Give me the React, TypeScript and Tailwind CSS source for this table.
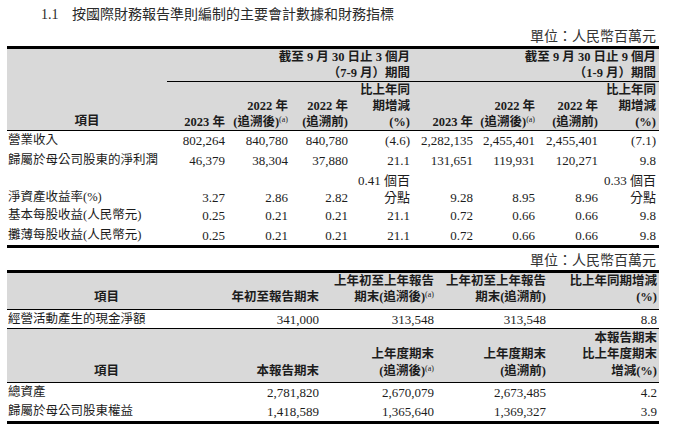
import React from 'react';

type Row = { label: string; values: string[]; h: string; tall?: boolean };

const font = "font-['Liberation_Serif','Noto_Sans_CJK_TC',serif]";

const periodRows: Row[] = [
  { label: '營業收入', values: ['802,264', '840,780', '840,780', '(4.6)', '2,282,135', '2,455,401', '2,455,401', '(7.1)'], h: 'h-[20px]' },
  { label: '歸屬於母公司股東的淨利潤', values: ['46,379', '38,304', '37,880', '21.1', '131,651', '119,931', '120,271', '9.8'], h: 'h-[20px]' },
  { label: '淨資產收益率(%)', values: ['3.27', '2.86', '2.82', '0.41 個百\n分點', '9.28', '8.95', '8.96', '0.33 個百\n分點'], h: 'h-[35px]', tall: true },
  { label: '基本每股收益(人民幣元)', values: ['0.25', '0.21', '0.21', '21.1', '0.72', '0.66', '0.66', '9.8'], h: 'h-[20px]' },
  { label: '攤薄每股收益(人民幣元)', values: ['0.25', '0.21', '0.21', '21.1', '0.72', '0.66', '0.66', '9.8'], h: 'h-[21px]' },
];

const periodCols = [61, 63, 60, 62, 63, 62, 63, 58];

function Sup() {
  return <sup className="text-[8px] font-normal">(a)</sup>;
}

function PeriodTable() {
  return (
    <table className="ml-[7px] w-[652px] table-fixed border-collapse border-y-[3px] border-black">
      <colgroup>
        <col className="w-[160px]" />
        {periodCols.map((w, i) => <col key={i} style={{ width: w }} />)}
      </colgroup>
      <thead className="bg-[#d9d9d9] text-[12.5px] font-bold leading-[16px]">
        <tr>
          <th rowSpan={2} className="h-[81px] pb-[1px] align-bottom text-center">項目</th>
          <th colSpan={4} className="h-[32px] border-b border-black pr-[3px] text-right align-top">截至 9 月 30 日止 3 個月<br />（7-9 月）期間</th>
          <th colSpan={4} className="h-[32px] border-b border-black pr-[3px] text-right align-top">截至 9 月 30 日止 9 個月<br />（1-9 月）期間</th>
        </tr>
        <tr className="[&>th]:h-[48px] [&>th]:pr-[3px] [&>th]:text-right [&>th]:align-bottom">
          <th>2023 年</th>
          <th className="whitespace-nowrap">2022 年<br />(追溯後)<Sup /></th>
          <th>2022 年<br />(追溯前)</th>
          <th>比上年同<br />期增減<br />(%)</th>
          <th>2023 年</th>
          <th className="whitespace-nowrap">2022 年<br />(追溯後)<Sup /></th>
          <th>2022 年<br />(追溯前)</th>
          <th>比上年同<br />期增減<br />(%)</th>
        </tr>
      </thead>
      <tbody className="border-t border-black">
        {periodRows.map((row) => (
          <tr key={row.label} className={row.tall ? 'align-bottom' : 'align-middle'}>
            <td className={`${row.h} whitespace-nowrap pl-[1px] text-[12.5px] leading-[17px]`}>{row.label}</td>
            {row.values.map((v, i) => (
              <td key={i} className="whitespace-pre-line pr-[3px] text-right text-[13px] leading-[17px]">{v}</td>
            ))}
          </tr>
        ))}
      </tbody>
    </table>
  );
}

function BalanceTable() {
  const headA = 'bg-[#d9d9d9] border-b border-black pr-[3px] text-right align-bottom pb-[4px]';
  const headB = 'bg-[#d9d9d9] border-b border-black pr-[3px] text-right align-bottom pb-[3px]';
  return (
    <table className="ml-[7px] w-[652px] table-fixed border-collapse border-y-[3px] border-black">
      <colgroup>
        <col className="w-[202px]" />
        <col className="w-[113px]" />
        <col className="w-[115px]" />
        <col className="w-[112px]" />
        <col className="w-[110px]" />
      </colgroup>
      <tbody>
        <tr className="text-[12.5px] font-bold leading-[16px]">
          <td className={`${headA} h-[36px] !text-center`}>項目</td>
          <td className={headA}>年初至報告期末</td>
          <td className={`${headA} whitespace-nowrap`}>上年初至上年報告<br />期末(追溯後)<Sup /></td>
          <td className={`${headA} whitespace-nowrap`}>上年初至上年報告<br />期末(追溯前)</td>
          <td className={`${headA} !pr-[2px]`}>比上年同期增減<br />(%)</td>
        </tr>
        <tr className="border-b border-black text-right text-[13px] leading-[17px]">
          <td className="h-[19px] pl-[1px] text-left text-[12.5px]">經營活動產生的現金淨額</td>
          <td className="pr-[3px]">341,000</td>
          <td className="pr-[3px]">313,548</td>
          <td className="pr-[3px]">313,548</td>
          <td className="pr-[2px]">8.8</td>
        </tr>
        <tr className="text-[12.5px] font-bold leading-[16.5px]">
          <td className={`${headB} h-[54px] !text-center`}>項目</td>
          <td className={headB}>本報告期末</td>
          <td className={`${headB} whitespace-nowrap`}>上年度期末<br />(追溯後)<Sup /></td>
          <td className={headB}>上年度期末<br />(追溯前)</td>
          <td className={`${headB} !pr-[2px]`}>本報告期末<br />比上年度期末<br />增減(%)</td>
        </tr>
        {[
          ['總資產', '2,781,820', '2,670,079', '2,673,485', '4.2'],
          ['歸屬於母公司股東權益', '1,418,589', '1,365,640', '1,369,327', '3.9'],
        ].map(([label, ...vals]) => (
          <tr key={label} className="text-right text-[13px] leading-[17px]">
            <td className="h-[20px] pl-[1px] text-left text-[12.5px]">{label}</td>
            {vals.map((v, i) => (
              <td key={i} className={i === 3 ? 'pr-[2px]' : 'pr-[3px]'}>{v}</td>
            ))}
          </tr>
        ))}
      </tbody>
    </table>
  );
}

export default function App() {
  return (
    <div className={`h-[431px] w-[680px] overflow-hidden bg-white pt-[4px] text-[#1c1c1c] ${font}`}>
      <div className="flex h-[20px] items-center pl-[41px] text-[14px] text-[#2a2a2a]">
        <span className="w-[31px]">1.1</span>
        <span>按國際財務報告準則編制的主要會計數據和財務指標</span>
      </div>
      <div className="flex h-[22px] items-center justify-end pr-[24px] pt-[2px] text-[14px] text-[#333]">單位：人民幣百萬元</div>
      <PeriodTable />
      <div className="mt-[2px] flex h-[20px] items-center justify-end pr-[24px] text-[14px] text-[#333]">單位：人民幣百萬元</div>
      <BalanceTable />
    </div>
  );
}
